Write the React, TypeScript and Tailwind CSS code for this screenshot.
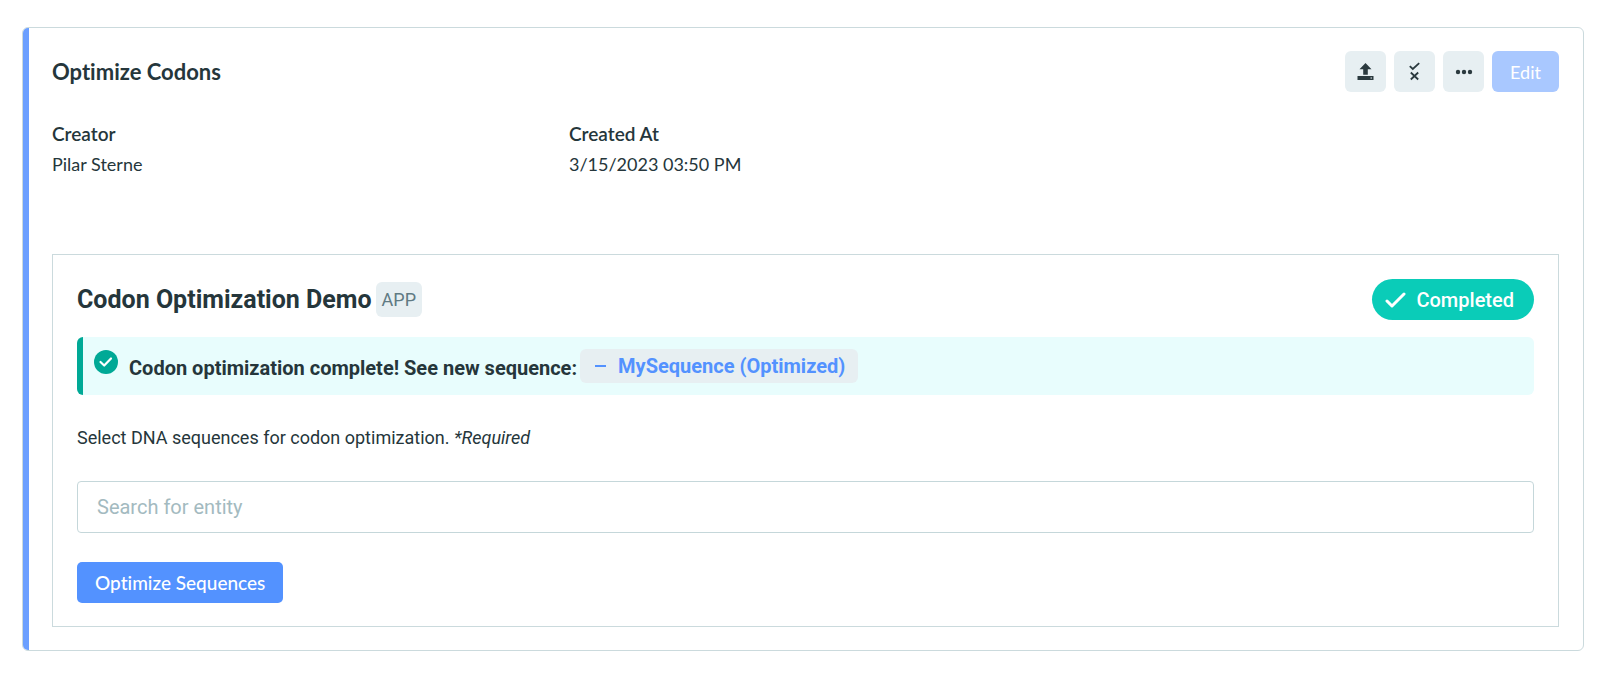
import type { ReactNode } from "react";

interface DetailProps {
  label: string;
  value: string;
}

const Detail = ({ label, value }: DetailProps) => {
  return (
    <div className="flex flex-col">
      <dt className="text-[19px] font-semibold leading-[31px]">{label}</dt>
      <dd className="leading-[30px]">{value}</dd>
    </div>
  );
};

interface IconButtonProps {
  label: string;
  children: ReactNode;
}

const IconButton = ({ label, children }: IconButtonProps) => {
  return (
    <button
      aria-label={label}
      className="flex h-[41px] w-[41px] items-center justify-center rounded-md bg-[#e7eff2] text-[#2b3a3f]"
    >
      {children}
    </button>
  );
};

const UploadIcon = () => (
  <svg width="17" height="19" viewBox="0 0 17 19" fill="currentColor">
    <path d="M8.500 1 14.500 7.300h-3.700V12.800H6.200V7.300H2.500z" />
    <path fillRule="evenodd" d="M.5 14h16v4H.5zM13.500 15.500v1h1.500v-1z" />
  </svg>
);

const ReviewIcon = () => (
  <svg
    width="11"
    height="19"
    viewBox="0 0 11 19"
    fill="none"
    stroke="currentColor"
    strokeWidth="1.800"
  >
    <path d="M.8 4.200 3.800 7 10.200 1.200" />
    <path d="m1.800 10.500 7.400 7m0-7-7.400 7" />
  </svg>
);

const MoreIcon = () => (
  <svg width="18" height="6" viewBox="0 0 18 6" fill="currentColor">
    <circle cx="3" cy="3" r="2.200" />
    <circle cx="9" cy="3" r="2.200" />
    <circle cx="15" cy="3" r="2.200" />
  </svg>
);

const AppPanel = () => {
  return (
    <section className="border border-[#cbdadd] px-6 pt-6 pb-[23px] font-['Roboto','Noto_Sans',sans-serif]">
      <div className="flex items-center justify-between">
        <div className="flex items-center gap-1">
          <h2 className="text-[25px] leading-8 font-bold">
            Codon Optimization Demo
          </h2>
          <span className="rounded-md bg-[#e7eff2] px-[6px] text-lg leading-[35px] text-[#5f7a83]">
            APP
          </span>
        </div>
        <span className="flex h-[41px] items-center gap-[10px] rounded-full bg-[#0accb8] pr-5 pl-[13px] text-xl font-medium text-white">
          <svg
            width="21"
            height="16"
            viewBox="0 0 21 16"
            fill="none"
            stroke="currentColor"
            strokeWidth="3"
            strokeLinecap="round"
            strokeLinejoin="round"
          >
            <path d="m2 9 5 5L19 2" />
          </svg>
          Completed
        </span>
      </div>

      <div
        role="status"
        className="mt-[17px] flex h-[58px] rounded-md border-l-6 border-[#00a996] bg-[#e8fdfd] pl-[11px]"
      >
        <svg className="mt-[13px]" width="24" height="24" viewBox="0 0 24 24">
          <circle cx="12" cy="12" r="12" fill="#00a996" />
          <path
            d="m6.500 12 3.700 3.500 6.800-7"
            fill="none"
            stroke="white"
            strokeWidth="2.200"
            strokeLinecap="round"
            strokeLinejoin="round"
          />
        </svg>
        <p className="ml-[11px] pt-[19px] text-xl leading-6 font-bold">
          Codon optimization complete! See new sequence:
        </p>
        <a
          href="#sequence"
          className="mt-3 ml-[3px] flex h-[34px] items-center gap-[11px] rounded-md bg-[#e7eff2] px-[13px] text-xl font-bold text-[#5392ff]"
        >
          <svg width="14" height="4" viewBox="0 0 14 4" fill="currentColor">
            <rect x="2" y="1" width="11" height="2" />
          </svg>
          MySequence (Optimized)
        </a>
      </div>

      <label htmlFor="entity" className="mt-[29px] block text-lg leading-7">
        Select DNA sequences for codon optimization. <em>*Required</em>
      </label>
      <input
        id="entity"
        type="text"
        placeholder="Search for entity"
        className="mt-[29px] block h-[52px] w-full rounded-[4px] border border-[#c5d7da] px-[19px] text-xl placeholder:text-[#a3bac0]"
      />
      <button className="mt-[29px] block h-[41px] rounded-[5px] bg-[#5392ff] px-[18px] font-['Lato',sans-serif] text-[19px] font-medium text-white">
        Optimize Sequences
      </button>
    </section>
  );
};

export default function App() {
  return (
    <main className="bg-white pt-[27px] pr-4 pb-7 pl-[22px] font-['Lato',sans-serif] text-lg text-[#25363b] [font-variant-ligatures:none]">
      <article className="flex overflow-hidden rounded-md border border-[#cbdadd]">
        <div className="w-[6px] shrink-0 bg-[#6b9fff]" />
        <div className="min-w-0 flex-1 pt-[23px] pr-6 pb-[23px] pl-[23px]">
          <header className="flex items-center justify-between">
            <h1 className="text-[22px] leading-7 font-bold">Optimize Codons</h1>
            <div className="flex gap-2">
              <IconButton label="Upload">
                <UploadIcon />
              </IconButton>
              <IconButton label="Review">
                <ReviewIcon />
              </IconButton>
              <IconButton label="More">
                <MoreIcon />
              </IconButton>
              <button className="h-[41px] w-[67px] rounded-md bg-[#a9c8ff] text-white">
                Edit
              </button>
            </div>
          </header>

          <dl className="mt-[26px] mb-[75px] grid grid-cols-3 gap-x-11">
            <Detail label="Creator" value="Pilar Sterne" />
            <Detail label="Created At" value="3/15/2023 03:50 PM" />
          </dl>

          <AppPanel />
        </div>
      </article>
    </main>
  );
}
